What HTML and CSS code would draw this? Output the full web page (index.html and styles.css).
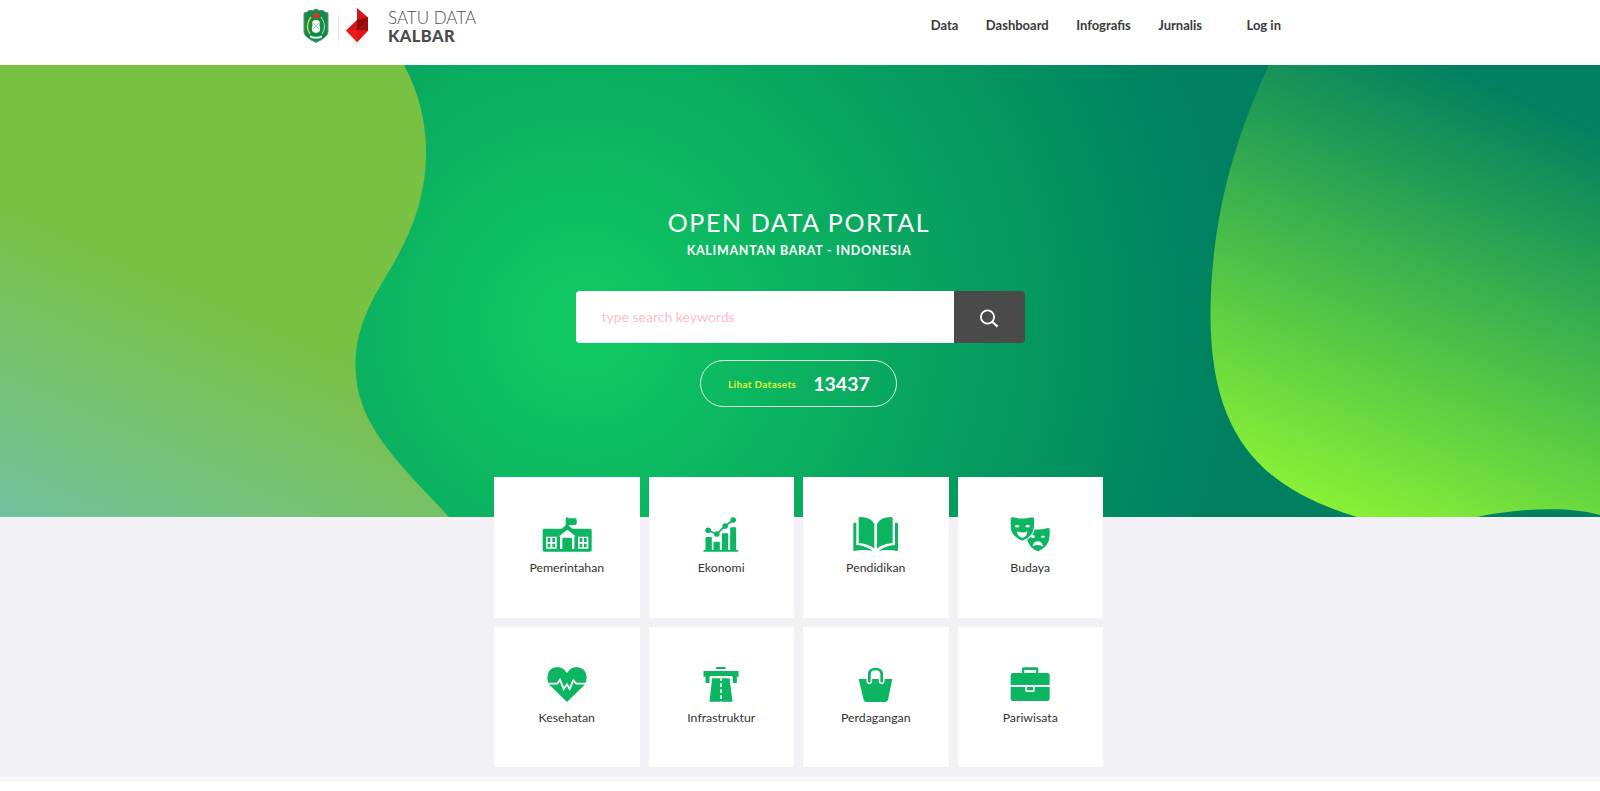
FILE: index.html
```html
<!DOCTYPE html>
<html lang="id">
<head>
<meta charset="utf-8">
<title>Satu Data Kalbar</title>
<link rel="stylesheet" href="styles.css">
</head>
<body>
<header class="header">
  <a class="brand">
    <svg class="crest" viewBox="0 0 26 36" width="26" height="36">
      <path d="M1 5 Q5 4 6 2.500 Q10 3 13 1 Q16 3 20 2.500 Q21 4 25 5 V24 Q25 29 13 34.500 Q1 29 1 24Z" fill="#128a49" stroke="#5c9b73"/>
      <path d="M8 9 Q1.500 18 7 26" fill="none" stroke="#d5cf3a" stroke-width="1.500"/>
      <path d="M18 9 Q24.500 18 19 26" fill="none" stroke="#9fd0a4" stroke-width="1.200"/>
      <circle cx="13.300" cy="7.800" r="3" fill="#df3326"/>
      <path d="M13 12 Q18 12 16.500 17 Q19 24 13 25 Q7 24 9.500 17 Q8 12 13 12Z" fill="#f3f6f3"/>
      <path d="M10 15l6 6M16 15l-6 6" stroke="#a9bdb0" stroke-width=".8"/>
      <path d="M7 27.500 Q13 30 19 27.500 V29.500 Q13 32 7 29.500Z" fill="#e9f2e9"/>
    </svg>
    <span class="divider"></span>
    <svg class="gem" viewBox="0 0 22 34" width="22" height="34">
      <path d="M11 0 L22 9.500 V22.500 L11 34 L0 22.500 L11 12Z" fill="#d61418"/>
      <path d="M11 12 L22 9.500 V22.500 H11Z" fill="#8f0a0c"/>
      <path d="M11 22.500 L22 9.500 V22.500Z" fill="#a30d10"/>
      <path d="M0 22.500 H22 L11 34Z" fill="#ee1a1d"/>
      <path d="M11 22.500 H22 L11 34Z" fill="#df1518"/>
    </svg>
    <span class="brand-text"><span class="brand-top">SATU DATA</span><span class="brand-name">KALBAR</span></span>
  </a>
  <nav class="nav">
    <a>Data</a><a>Dashboard</a><a>Infografis</a><a>Jurnalis</a><a class="login">Log in</a>
  </nav>
</header>

<section class="hero">
  <svg class="hero-art" viewBox="0 65 1600 451.500" preserveAspectRatio="none">
    <defs>
      <radialGradient id="base" gradientUnits="userSpaceOnUse" cx="582" cy="325" r="645">
        <stop offset="0" stop-color="#10cb62"/><stop offset=".4" stop-color="#0aae60"/><stop offset="1" stop-color="#008060"/>
      </radialGradient>
      <linearGradient id="left" gradientUnits="userSpaceOnUse" x1="118" y1="253" x2="0" y2="516">
        <stop offset="0" stop-color="#79c143"/><stop offset="1" stop-color="#73c2a0"/>
      </linearGradient>
      <linearGradient id="right" gradientUnits="userSpaceOnUse" x1="1270" y1="480" x2="1445" y2="62">
        <stop offset="0" stop-color="#88f036"/><stop offset="1" stop-color="#008060"/>
      </linearGradient>
    </defs>
    <rect y="65" width="1600" height="452" fill="url(#base)"/>
    <path d="M0 65 H404 C420 95 426 123 426 152 C426 200 410 237 385 278 C365 311 355.500 335 355.500 366 C355.500 425 400 464 449 517 H0Z" fill="url(#left)"/>
    <path d="M1269 65 C1231 145 1210.500 229 1210.500 315 C1210.500 440 1265 489 1357 517 H1477 C1520 508 1570 506 1600 515 V65Z" fill="url(#right)"/>
  </svg>
  <div class="hero-body">
    <h1 class="title">OPEN DATA PORTAL</h1>
    <h2 class="subtitle">KALIMANTAN BARAT - INDONESIA</h2>
    <form class="search">
      <input class="search-input" type="text" placeholder="type search keywords">
      <button class="search-button" type="button" aria-label="Search">
        <svg viewBox="0 0 20 20" width="20" height="20" fill="none" stroke="#fff" stroke-width="1.800"><circle cx="8.500" cy="8" r="6.600"/><path d="M13.300 12.800 L18.500 17.600" stroke-width="2.200"/></svg>
      </button>
    </form>
    <a class="datasets"><span class="datasets-label">Lihat Datasets</span><span class="datasets-count">13437</span></a>
  </div>
</section>

<main class="topics">
  <div class="grid">
    <a class="card">
      <svg class="icon" viewBox="157 139 150 108">
        <path d="M164 177H216L228 167V146Q232 139 236 146H256Q261 146 261 151V162Q261 166 256 166H238V169L249 177H301Q306 177 306 182V241Q306 246 301 246H164Q159 246 159 241V182Q159 177 164 177Z"/>
        <g class="cut"><path d="M169 201h32v36h-32zM265 201h31v36h-31zM211 238V202L209 199 233 180 257 199 254 202V238H247V207Q247 204 244 204H221Q218 204 218 207V238Z"/></g>
        <path d="M174 205h8v12h-8zM188 205h8v12h-8zM174 222h8v11h-8zM188 222h8v11h-8zM270 205h8v12h-8zM283 205h8v12h-8zM270 222h8v11h-8zM283 222h8v11h-8z"/>
      </svg>
      <span>Pemerintahan</span>
    </a>
    <a class="card">
      <svg class="icon" viewBox="619.500 139 150 108">
        <path d="M642 241H648V205Q648 202 651 202H664Q667 202 667 205V241H672V219Q672 216 675 216H688Q691 216 691 219V241H697V194Q697 191 700 191H713Q716 191 716 194V241H722V176Q722 173 725 173H737Q740 173 740 176V241H746V246H642Z"/>
        <path d="M656 182 L681 194 L707 169 L731 151" fill="none" class="line" stroke-width="5"/>
        <circle cx="656" cy="182" r="8.500"/><circle cx="682" cy="193" r="8.500"/><circle cx="707" cy="169" r="8.500"/><circle cx="731" cy="151" r="8.500"/>
      </svg>
      <span>Ekonomi</span>
    </a>
    <a class="card">
      <svg class="icon" viewBox="168 139 150 108">
        <path d="M191 146Q191 142 196 142Q228 142 238 163V237Q225 224 191 220ZM293 146Q293 142 288 142Q256 142 246 163V237Q259 224 293 220Z"/>
        <path d="M175 162Q175 159 179 159H184V226Q212 228 233 243Q202 238 178 244Q175 244 175 240ZM309 162Q309 159 305 159H300V226Q272 228 251 243Q282 238 306 244Q309 244 309 240Z"/>
      </svg>
      <span>Pendidikan</span>
    </a>
    <a class="card">
      <svg class="icon" viewBox="631 139 150 108">
        <path d="M697 184Q697 179 703 177Q731 183 760 175Q765 174 765 180V197Q765 230 731 245Q706 239 697 209Z"/>
        <path d="M648 147Q648 141 654 143Q683 150 712 143Q718 142 718 148V169Q717 202 683 213Q648 200 648 169Z" class="halo"/>
        <g class="cut"><path d="M660 170Q667 161 675 170Q667 177 660 170ZM691 170Q699 161 707 170Q699 177 691 170ZM667 185Q683 192 698 185Q698 203 683 204Q668 203 667 185ZM709 203Q709 196 715 196Q721 196 721 203Q715 208 709 203ZM738 202Q744 193 752 202Q744 207 738 202ZM714 230Q716 215 730 215Q743 216 745 231Q730 221 714 230Z"/></g>
      </svg>
      <span>Budaya</span>
    </a>
    <a class="card">
      <svg class="icon" viewBox="157 137 150 108">
        <path d="M232 245L179 193Q173 185 173 172Q175 141 203 140Q221 140 232 158Q243 140 261 140Q289 142 291 171Q291 185 285 193Z"/>
        <path d="M172 190H203L211 178L222 206L232 192L240 206L251 180L260 190H292" class="cutline" stroke-width="5.500"/>
      </svg>
      <span>Kesehatan</span>
    </a>
    <a class="card">
      <svg class="icon" viewBox="619.500 137 150 108">
        <path d="M682 140H706Q709 140 709 146H679Q679 140 682 140ZM642 152H747V169H742V188H730V172Q730 167 725 167H665Q660 167 660 172V188H648V169H642ZM668 174H720L729 244H660Z"/>
        <path d="M694.500 174V244" class="cutline" stroke-width="5" stroke-dasharray="11 7" stroke-dashoffset="3"/>
      </svg>
      <span>Infrastruktur</span>
    </a>
    <a class="card">
      <svg class="icon" viewBox="168 137 150 108">
        <path d="M191 176H292L279 238Q277 245 270 245H215Q208 245 206 238Z"/>
        <path d="M223 183V162Q223 146 241 146Q260 146 260 162V183" class="cutline" stroke-width="17" stroke-linecap="round"/>
        <path d="M223 183V162Q223 146 241 146Q260 146 260 162V183" class="line" fill="none" stroke-width="8" stroke-linecap="round"/>
      </svg>
      <span>Perdagangan</span>
    </a>
    <a class="card">
      <svg class="icon" viewBox="631 137 150 108">
        <path d="M682 158V146Q682 141 687 141H726Q731 141 731 146V158H758Q765 158 765 165V235Q765 242 758 242H655Q648 242 648 235V165Q648 158 655 158Z"/>
        <path d="M689 149H724V158H689ZM646 194H767V200H720V211Q720 215 716 215H696Q692 215 692 211V200H646Z" class="cut"/>
        <path d="M697 200H715V210H697Z"/>
      </svg>
      <span>Pariwisata</span>
    </a>
  </div>
</main>
<div class="strip"></div>
</body>
</html>
```
FILE: styles.css
```css
* { box-sizing: border-box; }
body { margin: 0; background: #fff; font-family: Lato, "Liberation Sans", sans-serif; color: #3c3c3c; height: 791px; overflow: hidden; }

.header { height: 65px; display: flex; justify-content: space-between; align-items: flex-start; padding: 8px 319px 0 303px; }
.brand { display: flex; align-items: flex-start; }
.divider { width: 1px; height: 40px; margin: 0 7px 0 9px; background: linear-gradient(#fff, #ddd 50%, #fff); }
.brand-text { display: flex; flex-direction: column; margin: 1px 0 0 20px; font-size: 17px; line-height: 18px; color: #4b4b4d; }
.brand-top { font-weight: 300; }
.brand-name { font-weight: 900; font-size: 16.500px; letter-spacing: .4px; }
.nav { display: flex; gap: 27.500px; padding-top: 8px; font-size: 13px; line-height: 19px; font-weight: 700; color: #3a3a3a; }
.login { margin-left: 17px; }

.hero { position: relative; height: 451.500px; }
.hero-art { position: absolute; inset: 0; width: 100%; height: 100%; display: block; }
.hero-body { position: relative; display: flex; flex-direction: column; align-items: center; padding-top: 141px; color: #fff; }
.title { margin: 0 2px 0 0; font-size: 25px; line-height: 32px; font-weight: 400; letter-spacing: 1.600px; }
.subtitle { margin: 5px 2px 0 0; font-size: 12.500px; line-height: 16px; font-weight: 700; letter-spacing: .7px; }
.search { display: flex; width: 449px; height: 52px; margin: 32px 0 0; border-radius: 4px; overflow: hidden; }
.search-input { flex: 1; min-width: 0; border: 0; padding: 0 26px 2px; background: #fff; font: 400 14px Lato, sans-serif; }
.search-input::placeholder { color: #ffc0cb; opacity: 1; }
.search-button { width: 71px; border: 0; padding: 7px 0 0; background: #4a4a4a; }
.datasets { display: flex; align-items: center; gap: 17px; width: 197px; height: 47px; margin-top: 17px; margin-right: 3px; padding-left: 27px; border: 1px solid #d9f5e4; border-radius: 24px; }
.datasets-label { font-size: 10px; font-weight: 900; color: #d3ec38; letter-spacing: .3px; }
.datasets-count { font-size: 19.500px; font-weight: 700; }

.topics { height: 260.500px; background: #f2f1f6; padding-left: 494px; }
.grid { position: relative; top: -39.500px; display: grid; grid-template-columns: repeat(4, 145.500px); grid-auto-rows: 140.500px; gap: 9px; }
.card { display: flex; flex-direction: column; align-items: center; background: #fff; padding-top: 39px; font-size: 12.300px; line-height: 20px; color: #333; }
.card span { margin-top: 6px; }
.icon { width: 50px; height: 36px; fill: #0cb561; flex: none; }
.icon .cut { fill: #fff; }
.icon .line { stroke: #0cb561; }
.icon .cutline { stroke: #fff; fill: none; }
.icon .halo { stroke: #fff; stroke-width: 7px; paint-order: stroke; }
.strip { height: 5px; background: #f8f8f9; }
```
